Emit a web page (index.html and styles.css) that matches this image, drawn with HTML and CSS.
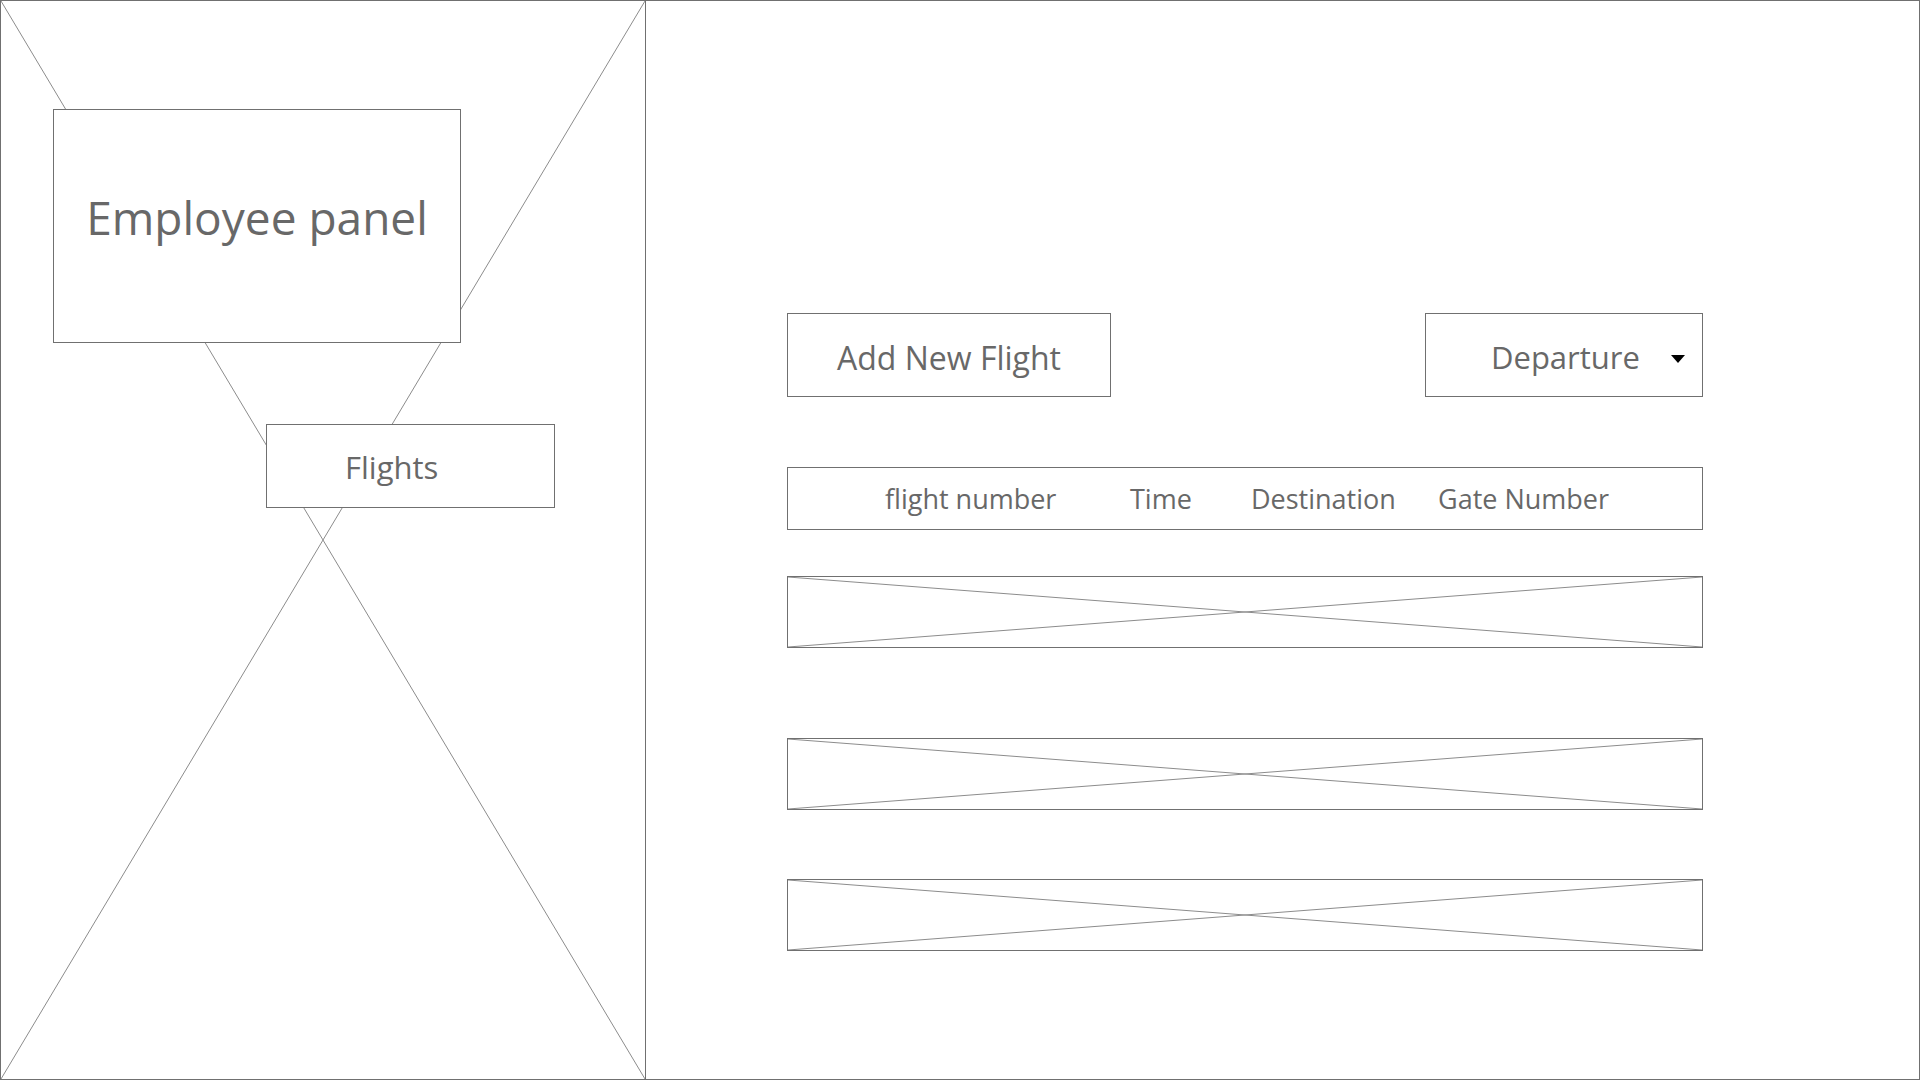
FILE: index.html
```html
<!DOCTYPE html>
<html lang="en">
<head>
    <meta charset="UTF-8">
    <meta name="viewport" content="width=device-width, initial-scale=1.0">
    <title>Employee Panel - Flights</title>
    <link rel="stylesheet" href="styles.css">
</head>
<body>
    <div class="screen">
        <!-- Sidebar (image placeholder behind the boxes) -->
        <aside class="sidebar">
            <svg class="cross" viewBox="0 0 100 100" preserveAspectRatio="none">
                <line x1="0" y1="0" x2="100" y2="100" vector-effect="non-scaling-stroke"/>
                <line x1="100" y1="0" x2="0" y2="100" vector-effect="non-scaling-stroke"/>
            </svg>
            <div class="panel-title">Employee panel</div>
            <a href="#" class="nav-box">Flights</a>
        </aside>

        <main class="content">
            <div class="toolbar">
                <button class="add-btn">Add New Flight</button>
                <div class="select">
                    <span class="select-label">Departure</span>
                    <span class="caret"></span>
                </div>
            </div>

            <div class="table-head">
                <span class="col col-number">flight number</span>
                <span class="col col-time">Time</span>
                <span class="col col-dest">Destination</span>
                <span class="col col-gate">Gate Number</span>
            </div>

            <div class="row-ph row-first">
                <svg class="cross" viewBox="0 0 100 100" preserveAspectRatio="none">
                    <line x1="0" y1="0" x2="100" y2="100" vector-effect="non-scaling-stroke"/>
                    <line x1="100" y1="0" x2="0" y2="100" vector-effect="non-scaling-stroke"/>
                </svg>
            </div>
            <div class="row-ph row-second">
                <svg class="cross" viewBox="0 0 100 100" preserveAspectRatio="none">
                    <line x1="0" y1="0" x2="100" y2="100" vector-effect="non-scaling-stroke"/>
                    <line x1="100" y1="0" x2="0" y2="100" vector-effect="non-scaling-stroke"/>
                </svg>
            </div>
            <div class="row-ph row-third">
                <svg class="cross" viewBox="0 0 100 100" preserveAspectRatio="none">
                    <line x1="0" y1="0" x2="100" y2="100" vector-effect="non-scaling-stroke"/>
                    <line x1="100" y1="0" x2="0" y2="100" vector-effect="non-scaling-stroke"/>
                </svg>
            </div>
        </main>
    </div>
</body>
</html>
```

FILE: styles.css
```css
:root {
    --line-color: #707070;
    --cross-color: #8c8c8c;
    --text-color: #686868;
    --bg-color: #ffffff;
}

* {
    box-sizing: border-box;
}

body {
    font-family: 'Segoe UI', 'Open Sans', sans-serif;
    background-color: var(--bg-color);
    color: var(--text-color);
    margin: 0;
    padding: 0;
}

.screen {
    display: flex;
    width: 1920px;
    height: 1080px;
    border: 1px solid var(--line-color);
    overflow: hidden;
}

/* Placeholder cross */
.cross {
    position: absolute;
    top: 0;
    left: 0;
    width: 100%;
    height: 100%;
    z-index: 0;
}

.cross line {
    stroke: var(--cross-color);
    stroke-width: 1;
}

/* Sidebar */
.sidebar {
    position: relative;
    width: 645px;
    flex-shrink: 0;
    border-right: 1px solid var(--line-color);
    display: flex;
    flex-direction: column;
    align-items: flex-start;
}

.panel-title {
    position: relative;
    z-index: 1;
    display: flex;
    align-items: center;
    justify-content: center;
    margin: 108px 0 0 52px;
    width: 408px;
    height: 234px;
    padding-bottom: 18px;
    border: 1px solid var(--line-color);
    background-color: var(--bg-color);
    font-size: 46px;
}

.nav-box {
    position: relative;
    z-index: 1;
    display: flex;
    align-items: center;
    margin: 81px 0 0 265px;
    width: 289px;
    height: 84px;
    padding-left: 78px;
    padding-top: 2px;
    border: 1px solid var(--line-color);
    background-color: var(--bg-color);
    color: var(--text-color);
    text-decoration: none;
    font-size: 31px;
}

/* Main content */
.content {
    flex: 1;
    padding: 312px 0 0 141px;
}

.toolbar {
    display: flex;
    justify-content: space-between;
    width: 916px;
}

.add-btn {
    width: 324px;
    height: 84px;
    border: 1px solid var(--line-color);
    background-color: var(--bg-color);
    color: var(--text-color);
    font-family: inherit;
    font-size: 32px;
    padding: 4px 0 0;
}

.select {
    display: flex;
    align-items: center;
    width: 278px;
    height: 84px;
    padding-left: 65px;
    padding-top: 4px;
    border: 1px solid var(--line-color);
    font-size: 31px;
}

.caret {
    margin-left: auto;
    margin-right: 17px;
    width: 0;
    height: 0;
    border-left: 7px solid transparent;
    border-right: 7px solid transparent;
    border-top: 8px solid #000;
    margin-top: 4px;
}

.table-head {
    display: flex;
    align-items: center;
    width: 916px;
    height: 63px;
    margin-top: 70px;
    padding-left: 97px;
    border: 1px solid var(--line-color);
    font-size: 27px;
}

.col-number {
    width: 245px;
}

.col-time {
    width: 121px;
}

.col-dest {
    width: 187px;
}

.row-ph {
    position: relative;
    width: 916px;
    height: 72px;
    border: 1px solid var(--line-color);
}

.row-first {
    margin-top: 46px;
}

.row-second {
    margin-top: 90px;
}

.row-third {
    margin-top: 69px;
}
```
